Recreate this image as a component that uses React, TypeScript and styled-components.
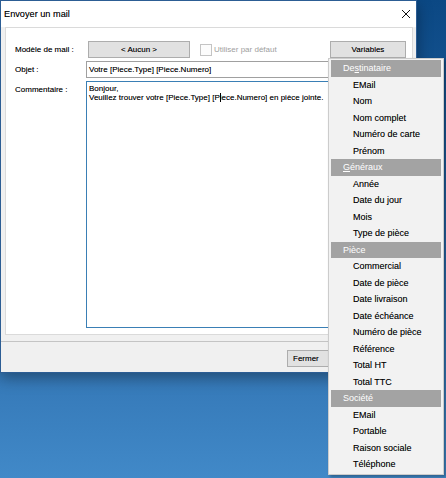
import styled, { createGlobalStyle } from "styled-components";

const GlobalStyle = createGlobalStyle`
  html, body {
    margin: 0;
    padding: 0;
  }
  body {
    font-family: "Liberation Sans", Arial, sans-serif;
    color: #000;
  }
`;

const Desktop = styled.div`
  position: relative;
  width: 446px;
  height: 478px;
  overflow: hidden;
  background: linear-gradient(180deg, #0b4884 0%, #2563a2 50%, #4189c8 100%);
`;

const Window = styled.div`
  width: 417px;
  height: 373px;
  box-sizing: border-box;
  border: 1px solid #2c5d94;
  background: #f0f0f0;
  display: flex;
  flex-direction: column;
  box-shadow: 0 5px 14px rgba(0, 0, 0, 0.35);
  text-shadow: 0 0 0.4px rgba(0, 0, 0, 0.4);
`;

const TitleBar = styled.div`
  height: 26px;
  flex: none;
  background: #fff;
  display: flex;
  align-items: center;
  justify-content: space-between;
  padding: 0 5px 0 3px;
  font-size: 9.2px;
`;

const Content = styled.div`
  padding: 0 3px 0 4px;
`;

const Panel = styled.div`
  height: 308px;
  box-sizing: border-box;
  border: 1px solid #dadada;
  background: #fff;
  padding: 13px 6px 6px 9px;
  display: grid;
  grid-template-columns: 71px 1fr;
  grid-template-rows: 17px 17px 1fr;
  row-gap: 3px;
  font-size: 8px;
`;

const Label = styled.div<{ $top?: boolean }>`
  display: flex;
  align-items: ${(p) => (p.$top ? "flex-start" : "center")};
  padding-top: ${(p) => (p.$top ? "4px" : "0")};
`;

const Toolbar = styled.div`
  display: flex;
  align-items: center;
`;

const Button = styled.div<{ $w: number; $left?: boolean }>`
  width: ${(p) => p.$w}px;
  height: 17px;
  box-sizing: border-box;
  border: 1px solid #adadad;
  background: #e1e1e1;
  display: flex;
  align-items: center;
  justify-content: ${(p) => (p.$left ? "flex-start" : "center")};
  padding-left: ${(p) => (p.$left ? "5px" : "0")};
  font-size: 8px;
`;

const CheckBox = styled.div`
  width: 12px;
  height: 12px;
  box-sizing: border-box;
  border: 1px solid #c4c4c4;
  background: #fcfcfc;
  margin: 0 2px 0 10px;
`;

const Disabled = styled.span`
  color: #a0a0a0;
  flex: 1;
  text-shadow: none;
`;

const Input = styled.div`
  box-sizing: border-box;
  border: 1px solid #a0a0a0;
  background: #fff;
  display: flex;
  align-items: center;
  padding-left: 2px;
`;

const Memo = styled.div`
  box-sizing: border-box;
  border: 1px solid #3a7fb5;
  background: #fff;
  padding: 2px 2px;
  line-height: 9px;
  white-space: pre-wrap;
`;

const Caret = styled.span`
  display: inline-block;
  width: 1px;
  height: 9px;
  margin-right: -1px;
  background: #000;
  vertical-align: -2px;
`;

const Footer = styled.div`
  flex: 1;
  margin-top: 6px;
  border-top: 1px solid #c4c4c4;
  display: flex;
  justify-content: flex-end;
  padding: 8px 8px 0 0;
`;

const Menu = styled.div`
  position: absolute;
  left: 328px;
  top: 58px;
  width: 116px;
  box-sizing: border-box;
  border: 1px solid #cccccc;
  background: #f2f2f2;
  padding: 1px 2px;
  box-shadow: 2px 2px 3px rgba(0, 0, 0, 0.3);
  font-size: 9px;
`;

const MenuHeader = styled.div`
  height: 16.5px;
  display: flex;
  align-items: center;
  padding-left: 12px;
  background: #a3a3a3;
  color: #fff;
`;

const MenuItem = styled.div`
  height: 16.5px;
  display: flex;
  align-items: center;
  padding-left: 22px;
  color: #000;
  text-shadow: 0 0 0.3px rgba(0, 0, 0, 0.35);
`;

const groups = [
  {
    title: ["De", "s", "tinataire"],
    items: ["EMail", "Nom", "Nom complet", "Numéro de carte", "Prénom"],
  },
  {
    title: ["", "G", "énéraux"],
    items: ["Année", "Date du jour", "Mois", "Type de pièce"],
  },
  {
    title: ["Pièce", "", ""],
    items: [
      "Commercial",
      "Date de pièce",
      "Date livraison",
      "Date échéance",
      "Numéro de pièce",
      "Référence",
      "Total HT",
      "Total TTC",
    ],
  },
  {
    title: ["Société", "", ""],
    items: ["EMail", "Portable", "Raison sociale", "Téléphone"],
  },
];

function App() {
  return (
    <Desktop>
      <GlobalStyle />
      <Window>
        <TitleBar>
          <span>Envoyer un mail</span>
          <svg width="10" height="10" viewBox="0 0 10 10">
            <path d="M1 1 L9 9 M9 1 L1 9" stroke="#111" strokeWidth="1" />
          </svg>
        </TitleBar>
        <Content>
          <Panel>
            <Label>Modèle de mail :</Label>
            <Toolbar>
              <Button $w={102} style={{ marginLeft: 2 }}>
                &lt; Aucun &gt;
              </Button>
              <CheckBox />
              <Disabled>Utiliser par défaut</Disabled>
              <Button $w={76}>Variables</Button>
            </Toolbar>
            <Label>Objet :</Label>
            <Input>Votre [Piece.Type] [Piece.Numero]</Input>
            <Label $top>Commentaire :</Label>
            <Memo>
              {"Bonjour,\nVeuillez trouver votre [Piece.Type] [P"}
              <Caret />
              {"iece.Numero] en pièce jointe."}
            </Memo>
          </Panel>
        </Content>
        <Footer>
          <Button $w={121} $left>
            Fermer
          </Button>
        </Footer>
      </Window>
      <Menu>
        {groups.map((g) => (
          <div key={g.title.join("")}>
            <MenuHeader>
              <span>
                {g.title[0]}
                <u>{g.title[1]}</u>
                {g.title[2]}
              </span>
            </MenuHeader>
            {g.items.map((it) => (
              <MenuItem key={it}>{it}</MenuItem>
            ))}
          </div>
        ))}
      </Menu>
    </Desktop>
  );
}

export default App;
